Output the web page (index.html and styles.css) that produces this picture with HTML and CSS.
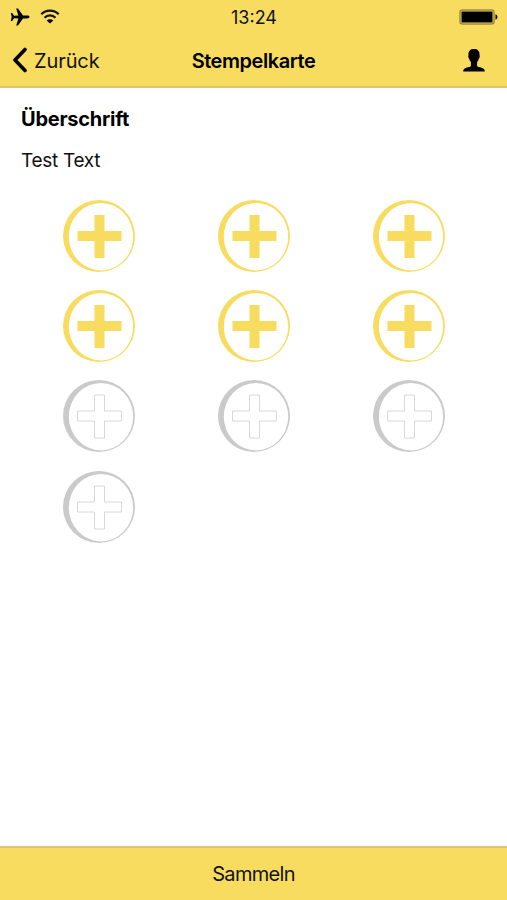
FILE: index.html
```
<!DOCTYPE html>
<html lang="de">

<head>
    <meta charset="UTF-8">
    <meta name="viewport" content="width=device-width, initial-scale=1.0">
    <title>Stempelkarte</title>
    <link rel="stylesheet" href="styles.css">
</head>

<body>
    <!-- Stamp shape, colored by .stamp / .stamp.empty -->
    <svg class="defs">
        <symbol id="stamp" viewBox="0 0 72 72">
            <path class="ring" fill-rule="evenodd"
                d="M36 0a36 36 0 1 0 0 72a36 36 0 1 0 0-72zM38 3a32.2 33.7 0 1 0 0 67.400a32.2 33.7 0 1 0 0-67.400z" />
            <path class="plus" d="M31.5 15h10v16h17v10h-17v17h-10v-17h-17v-10h17z" />
        </symbol>
    </svg>

    <div class="app">
        <header class="header">
            <div class="status">
                <div class="signals">
                    <svg class="plane" viewBox="0 0 20 18">
                        <path d="M19.5 9c0-.9-1.2-1.4-2.300-1.400h-4.200L8 .5H6.200l2.200 7-4.400.2L2.200 5H.8l.9 4-.9 4h1.400L4 10.300l4.400.2-2.200 7H8l5-7.100h4.200c1.100 0 2.300-.5 2.300-1.400z" />
                    </svg>
                    <svg class="wifi" viewBox="0 0 20 15">
                        <path class="arc" d="M1.3 5.3a12.3 12.3 0 0 1 17.400 0M4.500 8.700a7.800 7.800 0 0 1 11 0" />
                        <path d="M10 14.500L6.700 11.500a4.700 4.700 0 0 1 6.600 0z" />
                    </svg>
                </div>
                <div class="time">13:24</div>
                <svg class="battery" viewBox="0 0 39 16">
                    <rect class="case" x="1" y="1" width="34" height="14" rx="2.5" />
                    <rect x="2.500" y="2.500" width="31" height="11" rx=".5" />
                    <path d="M36.500 5.200q2 .6 2 2.800t-2 2.800z" />
                </svg>
            </div>
            <div class="navbar">
                <a class="back">
                    <svg class="chevron" viewBox="0 0 16 26">
                        <path d="M13 2.500L3 13l10 10.500" />
                    </svg>
                    <span>Zurück</span>
                </a>
                <div class="title">Stempelkarte</div>
                <svg class="user" viewBox="0 0 22 23">
                    <path d="M11 0c3.600 0 5.600 2 5.600 5.700 0 1 .2 1.300.1 2.300-.1.900-.7 1.200-.9 2-.3 1.300-1 2.200-1.700 3v3.400c0 1 .8 1.400 2 1.700 2.600.7 5.600 1.300 5.700 4.400H.2c.1-3.100 3.100-3.700 5.700-4.400 1.200-.3 2-.7 2-1.700V13c-.7-.8-1.400-1.700-1.700-3-.2-.8-.8-1.100-.9-2-.1-1 .1-1.300.1-2.300C5.400 2 7.400 0 11 0z" />
                </svg>
            </div>
        </header>

        <main class="content">
            <h1>Überschrift</h1>
            <p>Test Text</p>
            <div class="card">
                <svg class="stamp"><use href="#stamp" /></svg>
                <svg class="stamp"><use href="#stamp" /></svg>
                <svg class="stamp"><use href="#stamp" /></svg>
                <svg class="stamp"><use href="#stamp" /></svg>
                <svg class="stamp"><use href="#stamp" /></svg>
                <svg class="stamp"><use href="#stamp" /></svg>
                <svg class="stamp empty"><use href="#stamp" /></svg>
                <svg class="stamp empty"><use href="#stamp" /></svg>
                <svg class="stamp empty"><use href="#stamp" /></svg>
                <svg class="stamp empty"><use href="#stamp" /></svg>
            </div>
        </main>

        <footer class="collect">Sammeln</footer>
    </div>
</body>

</html>
```
FILE: styles.css
```
body {
    margin: 0;
    background-color: white;
    color: #111;
    font-family: Inter, "Liberation Sans", sans-serif;
    font-size: 20px;
}

svg {
    display: block;
}

.defs {
    display: none;
}

.app {
    display: flex;
    flex-direction: column;
    height: 100vh;
}

.header {
    box-sizing: border-box;
    height: 88px;
    background-color: #f8dc60;
    border-bottom: 2px solid #dec574;
}

/* Status bar */
.status {
    display: grid;
    grid-template-columns: 1fr auto 1fr;
    align-items: center;
    height: 34px;
    padding: 0 9px 0 10px;
}

.signals {
    display: flex;
    align-items: center;
    gap: 10px;
}

.plane {
    width: 20px;
    height: 18px;
}

.wifi {
    width: 20px;
    height: 15px;
    margin-bottom: 2px;
}

.arc {
    fill: none;
    stroke: #111;
    stroke-width: 2.2;
}

.time {
    font-size: 18px;
}

.battery {
    justify-self: end;
    width: 39px;
    height: 16px;
}

.case {
    fill: none;
    stroke: #a08b3d;
    stroke-width: 1.5;
}

/* Navigation bar */
.navbar {
    display: grid;
    grid-template-columns: 1fr auto 1fr;
    align-items: center;
    height: 54px;
    padding: 0 12px;
}

.back {
    display: flex;
    align-items: center;
    gap: 6px;
    letter-spacing: -0.1px;
}

.chevron {
    width: 16px;
    height: 26px;
    margin-top: -2px;
    fill: none;
    stroke: #000;
    stroke-width: 3.6;
    stroke-linecap: round;
    stroke-linejoin: round;
}

.title {
    color: #000;
    font-weight: 600;
    letter-spacing: -0.45px;
}

.user {
    justify-self: end;
    width: 22px;
    height: 23px;
    margin: 0 10px 1px 0;
}

/* Content */
.content {
    flex-grow: 1;
    padding: 19px 21px 0;
}

h1 {
    margin: 0 0 18px;
    color: #000;
    font-size: 20px;
    font-weight: 700;
    letter-spacing: -0.25px;
    line-height: 24px;
}

p {
    margin: 0;
    font-size: 19px;
    letter-spacing: -0.3px;
    line-height: 24px;
}

.card {
    display: grid;
    grid-template-columns: repeat(3, 1fr);
    justify-items: center;
    row-gap: 18.4px;
    margin-top: 26.5px;
}

.stamp {
    --plus-fill: #f8dc60;
    --plus-stroke: none;
    width: 72px;
    height: 72px;
    fill: #f8dc60;
}

.stamp.empty {
    --plus-fill: white;
    --plus-stroke: #d8d8d8;
    fill: #cacaca;
}

.plus {
    fill: var(--plus-fill);
    stroke: var(--plus-stroke);
}

.collect {
    box-sizing: border-box;
    display: flex;
    align-items: center;
    justify-content: center;
    height: 54px;
    background-color: #f8dc60;
    border-top: 2px solid #dec574;
    letter-spacing: -0.7px;
}
```
